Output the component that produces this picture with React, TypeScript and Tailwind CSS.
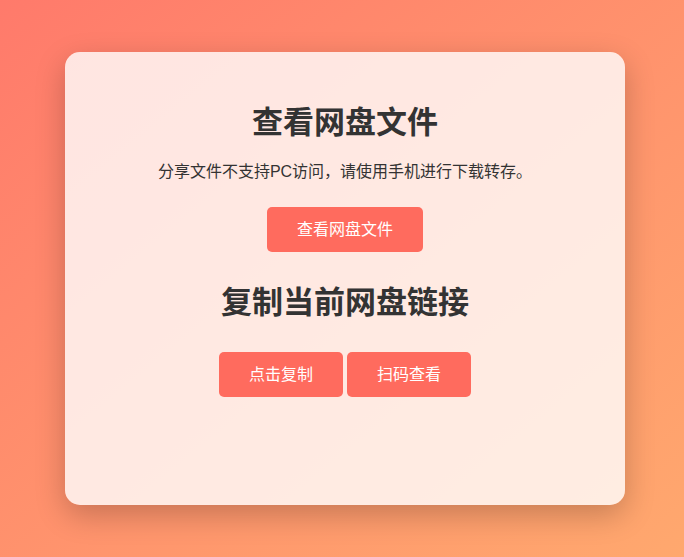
export default function App() {
  const font = { fontFamily: '"Liberation Sans", "Noto Sans CJK SC", sans-serif' };

  return (
    <div
      style={font}
      className="flex h-[557px] w-full items-center justify-center bg-gradient-to-br from-[#ff7a6b] to-[#ffa86e] pl-[6px]"
    >
      <div className="flex h-[453px] w-[560px] flex-col items-center rounded-[15px] bg-white/80 pt-[51px] text-center shadow-[0_10px_30px_rgba(0,0,0,0.22)]">
        <h1 className="text-[31px] leading-[40px] font-bold text-[#333]">查看网盘文件</h1>
        <p className="mt-[17px] text-[16px] leading-[24px] text-[#333]">
          分享文件不支持PC访问，请使用手机进行下载转存。
        </p>
        <button
          type="button"
          className="mt-[23px] h-[45px] rounded-[5px] bg-[#ff6b5e] px-[30px] text-[16px] text-white"
        >
          查看网盘文件
        </button>
        <h2 className="mt-[31px] text-[31px] leading-[40px] font-bold text-[#333]">复制当前网盘链接</h2>
        <div className="mt-[29px] flex gap-1">
          <button
            type="button"
            className="h-[45px] rounded-[5px] bg-[#ff6b5e] px-[30px] text-[16px] text-white"
          >
            点击复制
          </button>
          <button
            type="button"
            className="h-[45px] rounded-[5px] bg-[#ff6b5e] px-[30px] text-[16px] text-white"
          >
            扫码查看
          </button>
        </div>
      </div>
    </div>
  );
}
